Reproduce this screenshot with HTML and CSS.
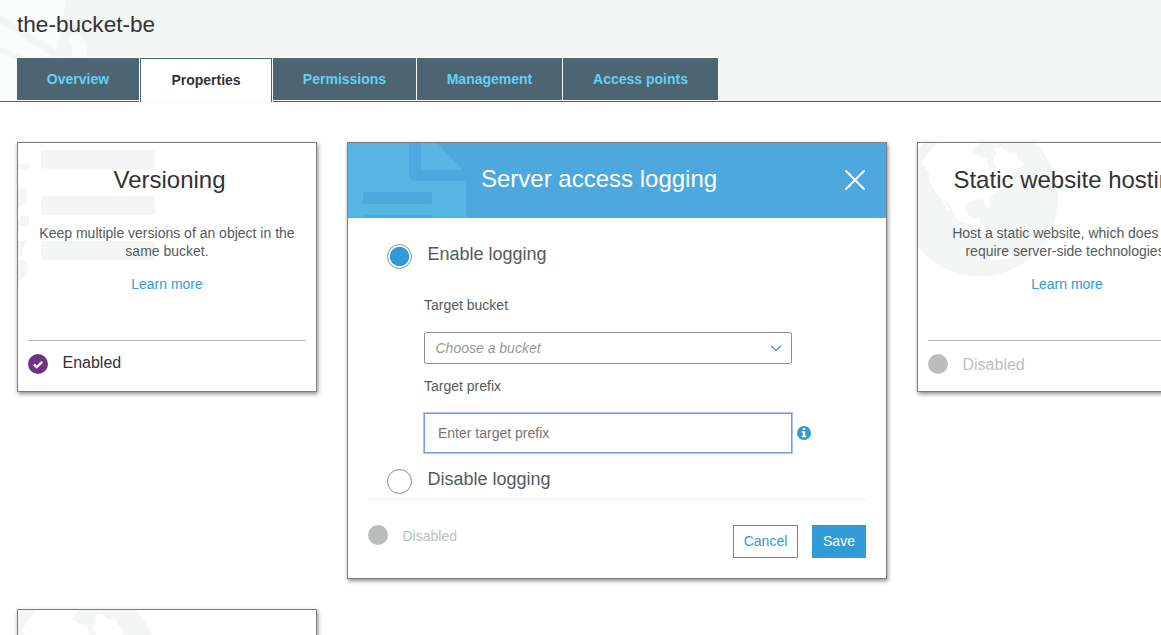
FILE: index.html
```html
<!DOCTYPE html>
<html lang="en">
<head>
<meta charset="utf-8">
<title>the-bucket-be</title>
<link rel="stylesheet" href="styles.css">
</head>
<body>
<svg class="defs" width="0" height="0">
  <symbol id="globe" viewBox="0 0 145 140">
    <circle class="shade" cx="61.5" cy="55" r="78.5"/>
    <path class="land" d="M19 0L10 10 4 20 7 25 11 28 11 37 15 44 18 50 24 56 30 69 31 66 25 56 32 62 37 75 47 80 57 82 62 88 67 90 66 84 62 83 62 75 57 76 50 72 47 65 50 59 60 56 66 57 69 65 72 66 72 55 77 50 82 47 92 42 88 37 95 34 90 28 97 29 94 25 104 25 106 20 100 16 98 9 90 10 84 4 77 5 78 11 75 19 79 23 74 27 70 22 69 15 61 14 54 9 57 4 62 0Z"/>
    <path class="land" d="M73 109L97 110 94 115 72 118Z"/>
  </symbol>
</svg>
<header class="page-header">
  <svg class="header-art" width="100" height="101" viewBox="0 0 100 101">
    <path d="M0 0H66L57 51 0 14Z M0 23L52 56Q42 62 28 58L0 47Z M0 52L17 61V101H0Z M68 42Q68 34 76 34Q88 38 87 58H69Q76 51 68 42Z"/>
  </svg>
  <h1>the-bucket-be</h1>
  <nav class="tabs">
    <a class="tab overview">Overview</a>
    <a class="tab active">Properties</a>
    <a class="tab permissions">Permissions</a>
    <a class="tab management">Management</a>
    <a class="tab points">Access points</a>
  </nav>
</header>
<main class="grid">
  <section class="card">
    <svg class="art" width="145" height="150" viewBox="0 0 145 150">
      <g class="shade"><rect x="23" y="7" width="114" height="19" rx="2"/><rect x="23" y="53" width="114" height="19" rx="2"/><rect x="23" y="98" width="114" height="19" rx="2"/>
      <path d="M0 21H11V26H0Z M0 43Q9 45 9 54Q7 62 0 64Z M2 73H11V83H0V78H2Z M0 98H9L4 107V112L0 114Z M0 116Q10 116 10 126Q8 135 0 139Z"/></g>
    </svg>
    <h2>Versioning</h2>
    <p>Keep multiple versions of an object in the same bucket.</p>
    <a class="learn">Learn more</a>
    <footer class="status on">
      <svg width="20" height="20" viewBox="0 0 20 20"><circle cx="10" cy="10" r="10" fill="#6c3483"/><path d="M5.8 10.4L8.7 13.1 14.2 7.8" fill="none" stroke="#fff" stroke-width="2.3"/></svg>
      <span>Enabled</span>
    </footer>
  </section>
  <section class="card dialog">
    <header class="dialog-head">
      <svg class="art" width="119" height="75" viewBox="0 0 119 75">
        <path fill="#57b5e3" d="M0 0H61V30Q61 38 69 38H118V75H84Q84 72 81 72H18Q15 72 15 75H0Z M73 0H89L115 27H73Z"/>
        <rect x="15" y="49" width="69" height="12" rx="2" fill="#4da8dd"/>
      </svg>
      <h2>Server access logging</h2>
      <svg class="close" width="22" height="22" viewBox="0 0 22 22"><path d="M2 2L20 20M20 2L2 20" stroke="#fff" stroke-width="1.8" stroke-linecap="round"/></svg>
    </header>
    <div class="option enable"><span class="radio checked"></span><span>Enable logging</span></div>
    <div class="fields">
      <label>Target bucket</label>
      <div class="select"><span>Choose a bucket</span>
        <svg width="12" height="8" viewBox="0 0 12 8"><path d="M1.2 2L6 6.4 10.8 2" fill="none" stroke="#329ad6" stroke-width="1.4"/></svg>
      </div>
      <label>Target prefix</label>
      <div class="prefix-row">
        <div class="input">Enter target prefix</div>
        <svg width="14" height="14" viewBox="0 0 14 14"><circle cx="7" cy="7" r="7" fill="#329ad6"/><path fill="#fff" d="M5.7 2h2.4v2H5.7ZM4.8 5.2h3.4v4.5h1.1v1.6H4.8V9.7h1.1V6.8H4.8Z"/></svg>
      </div>
    </div>
    <div class="option disable"><span class="radio"></span><span>Disable logging</span></div>
    <footer class="dialog-foot">
      <i class="dot"></i><span class="state">Disabled</span>
      <a class="btn cancel">Cancel</a><a class="btn save">Save</a>
    </footer>
  </section>
  <section class="card">
    <svg class="art" width="145" height="140"><use href="#globe"/></svg>
    <h2>Static website hosting</h2>
    <p>Host a static website, which does not<br>require server-side technologies.</p>
    <a class="learn">Learn more</a>
    <footer class="status off"><i class="dot"></i><span>Disabled</span></footer>
  </section>
  <section class="card next">
    <svg class="art" width="145" height="140"><use href="#globe"/></svg>
  </section>
</main>
</body>
</html>
```
FILE: styles.css
```css
* { box-sizing: border-box; }
html, body { height: 100%; overflow: hidden; }
body { margin: 0; background: #fff; color: #333; font: 14px/18px "Liberation Sans", Arial, sans-serif; }
h1, h2, p { margin: 0; font-weight: 400; }
.defs { position: absolute; }
.shade { fill: #f4f6f6; }
.land { fill: #fff; }
.page-header { position: relative; height: 102px; background: #f4f6f6; border-bottom: 1px solid #4d6572; padding: 10px 17px 0; }
.header-art { position: absolute; left: 0; top: 0; fill: #fafcfc; }
h1 { position: relative; font-size: 22.6px; line-height: 29px; height: 48px; }
.tabs { position: relative; display: flex; align-items: flex-start; height: 44px; }
.tab { height: 42px; line-height: 42px; text-align: center; font-weight: 700; background: #4d6572; color: #62d1f2; box-shadow: 0 0 0 1px #fafcfc; }
.tab.active { width: 132px; height: 44px; margin: 0 1px; background: #fff; color: #333; border: 1px solid #4d6572; border-bottom: 0; }
.overview { width: 122px; }
.permissions { width: 143px; margin-right: 1px; }
.management { width: 145px; margin-right: 1px; }
.points { width: 155px; }
.grid { display: grid; grid-template-columns: 300px 540px 300px; grid-template-rows: 437px 250px; column-gap: 30px; row-gap: 30px; padding: 40px 0 0 17px; align-items: start; width: 1217px; }
.card { position: relative; height: 250px; background: #fff; border: 1px solid #7d7d7d; box-shadow: 1px 2px 4px rgba(0,0,0,.45); padding: 21px 10px 0; text-align: center; overflow: hidden; }
.card > .art { position: absolute; left: 0; top: 0; }
.card h2 { position: relative; padding-left: 5px; font-size: 24px; line-height: 32px; height: 60px; white-space: nowrap; }
.card .dialog-head h2 { padding-left: 0; }
.card p { position: relative; padding: 0 10px; height: 51px; color: #545b5c; }
.learn { display: block; position: relative; height: 65px; color: #329ad6; }
.status { display: flex; border-top: 1px solid #b7b9b9; padding-top: 13px; gap: 14.5px; font-size: 16px; line-height: 20px; }
.on span { margin-top: -1px; }
.off { color: #bdbfbf; }
.off span { margin-top: 1px; }
.dot { width: 20px; height: 20px; border-radius: 50%; background: #bbbdbd; }
.dialog { height: 437px; padding: 0; text-align: left; color: #545b5c; }
.dialog-head { display: flex; justify-content: space-between; height: 75px; padding: 20px 20px 0 133px; background: #4da8dd; color: #fff; }
.dialog-head .art { position: absolute; left: 0; top: 0; }
.close { margin-top: 6px; }
.option { display: flex; gap: 15.5px; padding-left: 39px; font-size: 18px; line-height: 22px; height: 26px; }
.enable { margin-top: 25px; }
.disable { margin-top: 15px; }
.radio { width: 25px; height: 25px; margin-top: 1px; border: 1px solid #879191; border-radius: 50%; background: #fff; }
.radio.checked { background: radial-gradient(circle, #329ad6 9.3px, #fff 10px); }
.fields { padding: 27px 0 0 76px; }
.fields label { display: block; height: 36px; }
.select { display: flex; align-items: center; justify-content: space-between; width: 368px; height: 32px; margin-bottom: 13px; padding: 0 9px 0 10.5px; border: 1px solid #879191; border-radius: 2px; color: #999; font-style: italic; }
.prefix-row { display: flex; align-items: center; gap: 5px; }
.input { width: 368px; height: 40px; padding: 0 13px; border: 1px solid #729de0; box-shadow: 0 0 0 1px #a9c6f5; line-height: 38px; color: #757575; }
.dialog-foot { display: flex; margin: 5px 20px 0; padding-top: 25px; border-top: 1px solid #f0f2f2; }
.state { margin: 2px auto 0 14.5px; color: #bdbfbf; }
.btn { height: 33px; border: 1px solid #329ad6; line-height: 31px; text-align: center; color: #329ad6; }
.cancel { width: 65px; }
.save { width: 54px; margin-left: 14px; background: #329ad6; color: #fff; }
```
